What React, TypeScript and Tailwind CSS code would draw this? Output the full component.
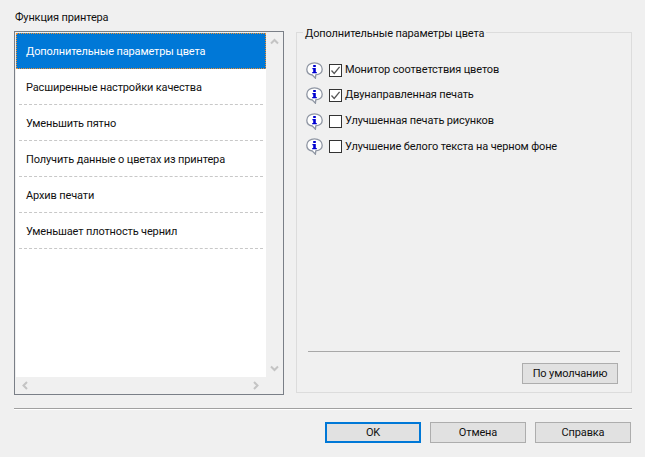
import React from "react";

const items = [
  "Дополнительные параметры цвета",
  "Расширенные настройки качества",
  "Уменьшить пятно",
  "Получить данные о цветах из принтера",
  "Архив печати",
  "Уменьшает плотность чернил",
];

const options: [string, boolean][] = [
  ["Монитор соответствия цветов", true],
  ["Двунаправленная печать", true],
  ["Улучшенная печать рисунков", false],
  ["Улучшение белого текста на черном фоне", false],
];

function InfoIcon() {
  return (
    <svg width="17" height="17" viewBox="0 0 17 17" className="shrink-0">
      <path d="M8.5 0.8C4.4 0.8 0.8 3.4 0.8 7.2c0 3.2 2.4 5.4 5.6 5.8L9.4 16.2l.4-3.3c3.6-.5 6.4-2.6 6.4-5.7 0-3.8-3.6-6.4-7.7-6.4z" fill="#fff" stroke="#8f96a3" strokeWidth="1.3" />
      <rect x="7.2" y="3" width="2.6" height="2" fill="#0000d0" />
      <path d="M6.4 6H9.8v4h1v1.2H6.2V10h1V7.2H6.4z" fill="#0000d0" />
    </svg>
  );
}

function Checkbox({ checked }: { checked: boolean }) {
  return (
    <span className="w-[13px] h-[13px] shrink-0 border border-[#333333] bg-white flex items-center justify-center">
      {checked && (
        <svg width="11" height="11" viewBox="0 0 11 11">
          <path d="M1.5 5.5 L4.2 8.4 L9.6 1.8" fill="none" stroke="#555555" strokeWidth="1.3" />
        </svg>
      )}
    </span>
  );
}

function Chevron({ d }: { d: string }) {
  return (
    <svg width="9" height="9" viewBox="0 0 9 9">
      <path d={d} fill="none" stroke="#c4c4c4" strokeWidth="2" />
    </svg>
  );
}

function Btn({ children, primary }: { children: React.ReactNode; primary?: boolean }) {
  return (
    <button
      className={
        primary
          ? "w-[96px] h-[21px] shrink-0 bg-[#e1e1e1] border-2 border-[#0078d7] text-[#111111] leading-none"
          : "w-[96px] h-[21px] shrink-0 bg-[#e1e1e1] border border-[#adadad] text-[#111111] leading-none"
      }
    >
      {children}
    </button>
  );
}

export default function App() {
  return (
    <div className="w-[645px] h-[457px] bg-[#f0f0f0] overflow-hidden flex flex-col px-[14px] text-[#111111] font-['Roboto','Noto_Sans',sans-serif] text-[11px] tracking-[-0.14px]">
      <div className="h-[24px] pt-[10px] leading-[16px] pl-px shrink-0">Функция принтера</div>
      <div className="flex h-[371px] shrink-0">
        <div className="w-[270px] h-[364px] mt-[7px] shrink-0 border border-[#7a7f87] flex flex-col p-px">
          <div className="flex h-[344px]">
            <div className="w-[250px] h-[344px] bg-white flex flex-col">
              {items.map((t, i) =>
                i === 0 ? (
                  <div key={t} className="h-[36px] shrink-0 bg-[#0078d7] border border-dotted border-[#f09030] text-white flex items-center pl-[9px] pt-[2px]">
                    {t}
                  </div>
                ) : (
                  <div key={t} className="h-[36px] shrink-0 mx-[3px] border-b border-dashed border-[#c8c8c8] flex items-center pl-[7px] pt-[3px]">
                    {t}
                  </div>
                )
              )}
            </div>
            <div className="flex-1 flex flex-col items-center justify-between py-[4px]">
              <Chevron d="M1 6.5 L4.5 3 L8 6.5" />
              <Chevron d="M1 2.5 L4.5 6 L8 2.5" />
            </div>
          </div>
          <div className="flex-1 flex items-center justify-between pl-[5px] pr-[22px]">
            <Chevron d="M6 1 L2.5 4.5 L6 8" />
            <Chevron d="M3 1 L6.5 4.5 L3 8" />
          </div>
        </div>

        <fieldset className="ml-[12px] w-[336px] h-[369px] shrink-0 border border-[#dcdcdc] px-[11px] flex flex-col">
          <legend className="-ml-[5px] px-[2px] pt-[3px] leading-[14px]">Дополнительные параметры цвета</legend>
          <div className="flex flex-col gap-[9.6px] pt-[21px] -ml-[2px]">
            {options.map(([t, c]) => (
              <div key={t} className="flex items-center h-[16px]">
                <InfoIcon />
                <span className="ml-[6px]"><Checkbox checked={c} /></span>
                <span className="ml-[3px]">{t}</span>
              </div>
            ))}
          </div>
          <div className="flex-1" />
          <div className="border-t border-[#a8a8a8] w-[312px]" />
          <div className="flex justify-end w-[310px] pt-[11px] pb-[8px]">
            <Btn>По умолчанию</Btn>
          </div>
        </fieldset>
      </div>
      <div className="mt-[13px] h-[2px] shrink-0 bg-white border-t border-[#a0a0a0] w-[618px]" />
      <div className="flex justify-end gap-[9px] w-[617px] mt-[12px] shrink-0">
        <Btn primary>OK</Btn>
        <Btn>Отмена</Btn>
        <Btn>Справка</Btn>
      </div>
    </div>
  );
}
